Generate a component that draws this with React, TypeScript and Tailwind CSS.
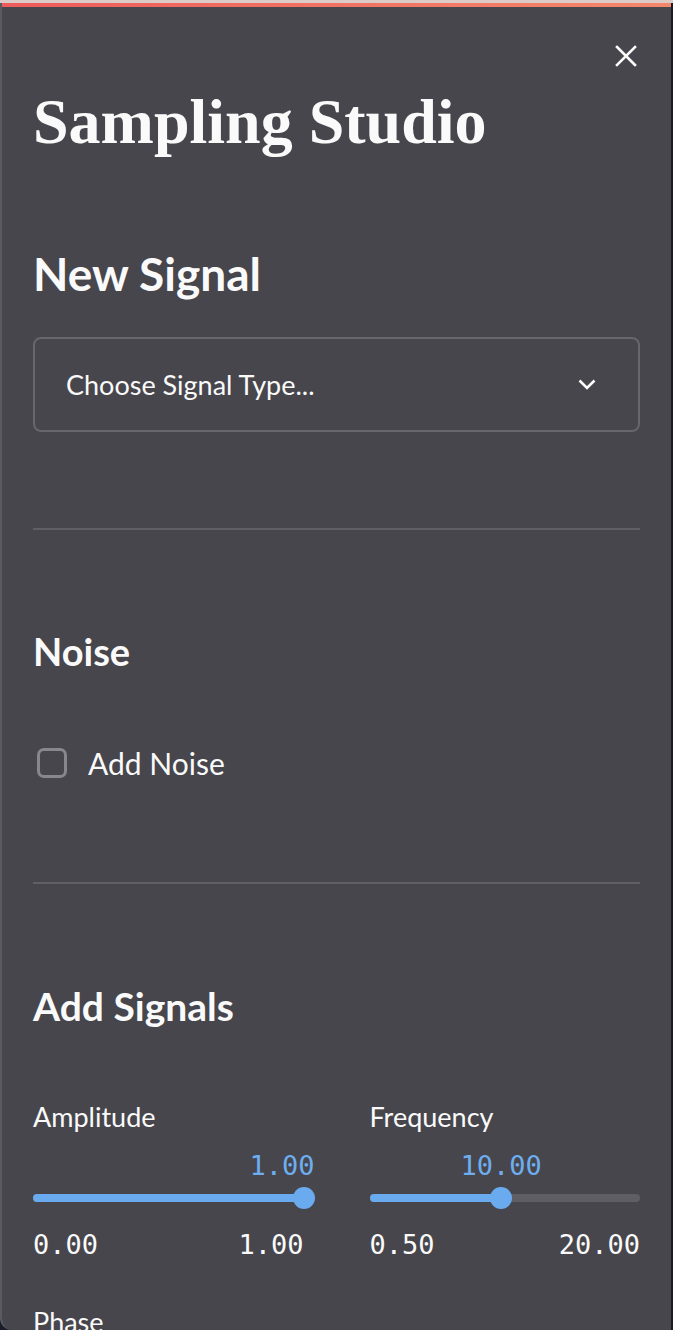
import React from 'react';

const SANS = { fontFamily: 'Lato, "Noto Sans", sans-serif' };
const MONO = { fontFamily: '"DejaVu Sans Mono", "Liberation Mono", monospace' };

const Slider: React.FC<{
  label: string;
  value: string;
  min: string;
  max: string;
  pct: number;
  alignEnd?: boolean;
}> = ({ label, value, min, max, pct, alignEnd }) => (
  <div className="flex flex-col">
    <div className="h-[28px] flex items-center text-[27px] leading-none text-[#fafafa]" style={SANS}>
      {label}
    </div>
    <div className="relative mt-[21px] h-[28px]">
      {/* value bubble over the thumb */}
      <div
        className="absolute top-0 h-[28px] flex items-center text-[27px] leading-none text-[#6eaef0] whitespace-nowrap"
        style={{ ...MONO, left: `${pct}%`, transform: alignEnd ? 'translateX(calc(-100% + 11px))' : 'translateX(-50%)' }}
      >
        {value}
      </div>
    </div>
    <div className="relative mt-[8px] h-[22px] flex items-center">
      <div className="w-full h-[8px] rounded-full bg-[#5f5e64]">
        <div className="h-full rounded-full bg-[#6aabf0]" style={{ width: `${pct}%` }} />
      </div>
      <div
        className="absolute top-0 w-[22px] h-[22px] rounded-full bg-[#6aabf0]"
        style={{ left: `calc(${pct}% - 11px)` }}
      />
    </div>
    <div className="mt-[21px] h-[28px] flex items-center justify-between text-[27px] leading-none text-[#fafafa]" style={MONO}>
      <span>{min}</span>
      <span>{max}</span>
    </div>
  </div>
);

export default function App() {
  return (
    <div className="w-[673px] h-[1330px] overflow-hidden bg-[#1a1e2a] flex flex-col">
      <div className="h-[3px] shrink-0 bg-[#dccbc6]" />
      <div className="flex flex-1 min-h-0">
        <div className="flex-1 bg-[#47464c] border-l-2 border-[#5b5a60] rounded-bl-[12px] overflow-hidden">
          <div className="h-[4px] bg-gradient-to-r from-[#ee5b5b] to-[#f3876b]" />

          {/* close */}
          <div className="mt-[27px] h-[44px] flex items-center justify-end pr-[34px]">
            <svg width="22" height="22" viewBox="0 0 22 22" fill="none" stroke="#fafafa" strokeWidth="2.6" strokeLinecap="square">
              <path d="M2 2 L20 20 M20 2 L2 20" />
            </svg>
          </div>

          <div className="px-[31px] flex flex-col">
            <h1
              className="mt-[12px] h-[64px] flex items-center text-[64px] leading-none font-bold text-[#fafafa]"
              style={{ fontFamily: '"Liberation Serif", "Times New Roman", serif' }}
            >
              Sampling Studio
            </h1>

            <h2 className="mt-[97px] h-[46px] flex items-center text-[46px] leading-none font-bold text-[#fafafa]" style={SANS}>
              New Signal
            </h2>

            <div className="mt-[40px] h-[95px] rounded-[8px] border-2 border-[#67666c] flex items-center justify-between pl-[31px] pr-[42px]">
              <span className="text-[27px] leading-none text-[#fafafa]" style={SANS}>
                Choose Signal Type...
              </span>
              <svg width="18" height="11" viewBox="0 0 18 11" fill="none" stroke="#fafafa" strokeWidth="2.6">
                <path d="M1.5 1.5 L9 9 L16.5 1.5" />
              </svg>
            </div>

            <div className="mt-[96px] h-[2px] bg-[#615f66]" />

            <h3 className="mt-[102px] h-[38px] flex items-center text-[38px] leading-none font-bold text-[#fafafa]" style={SANS}>
              Noise
            </h3>

            <label className="mt-[78px] h-[30px] flex items-center gap-[21px]">
              <span className="ml-[4px] w-[30px] h-[30px] rounded-[7px] border-[3px] border-[#88878c]" />
              <span className="text-[30px] leading-none text-[#fafafa]" style={SANS}>
                Add Noise
              </span>
            </label>

            <div className="mt-[104px] h-[2px] bg-[#615f66]" />

            <h3 className="mt-[103px] h-[38px] flex items-center text-[39px] leading-none font-bold text-[#fafafa]" style={SANS}>
              Add Signals
            </h3>

            <div className="mt-[77px] grid grid-cols-2 gap-[66px]">
              <Slider label="Amplitude" value="1.00" min="0.00" max="1.00" pct={100} alignEnd />
              <Slider label="Frequency" value="10.00" min="0.50" max="20.00" pct={48.7} />
            </div>

            <div className="mt-[49px] h-[28px] flex items-center text-[27px] leading-none text-[#fafafa]" style={SANS}>
              Phase
            </div>
          </div>
        </div>
        <div className="w-[2px] bg-[#171c28]" />
      </div>
    </div>
  );
}
